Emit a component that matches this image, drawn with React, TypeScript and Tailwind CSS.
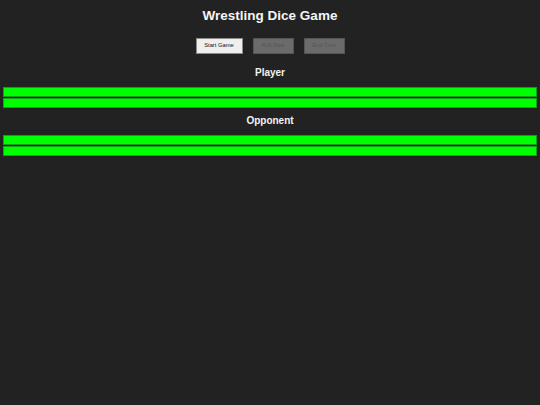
import React from "react";

function Bar() {
  return <div className="h-[10px] w-full border border-[#14a014] bg-[#00ff00]" />;
}

function Side({ name, top }: { name: string; top: string }) {
  return (
    <section className={top}>
      <h2 className="text-[10px] font-bold leading-[12px] text-[#f2f2f2]">{name}</h2>
      <div className="mt-[8px] flex flex-col gap-[1px]">
        <Bar />
        <Bar />
      </div>
    </section>
  );
}

export default function App() {
  return (
    <div
      className="min-h-screen bg-[#222222] px-[3px] text-center"
      style={{ fontFamily: '"Liberation Sans", Arial, sans-serif' }}
    >
      <h1 className="pt-[8px] text-[13.5px] font-bold leading-[16px] text-[#f5f5f5]">
        Wrestling Dice Game
      </h1>
      <div className="mt-[14px] flex justify-center gap-[10px]">
        <button className="h-[16px] w-[47px] border border-[#8a8a8a] bg-[#efefef] text-[5.8px] leading-none text-[#111]">
          Start Game
        </button>
        <button
          disabled
          className="h-[16px] w-[41px] border border-[#555] bg-[#6b6b6b] text-[5.8px] leading-none text-[#555]"
        >
          Roll Dice
        </button>
        <button
          disabled
          className="h-[16px] w-[41px] border border-[#555] bg-[#6b6b6b] text-[5.8px] leading-none text-[#555]"
        >
          End Turn
        </button>
      </div>
      <Side name="Player" top="mt-[13px]" />
      <Side name="Opponent" top="mt-[7px]" />
    </div>
  );
}
